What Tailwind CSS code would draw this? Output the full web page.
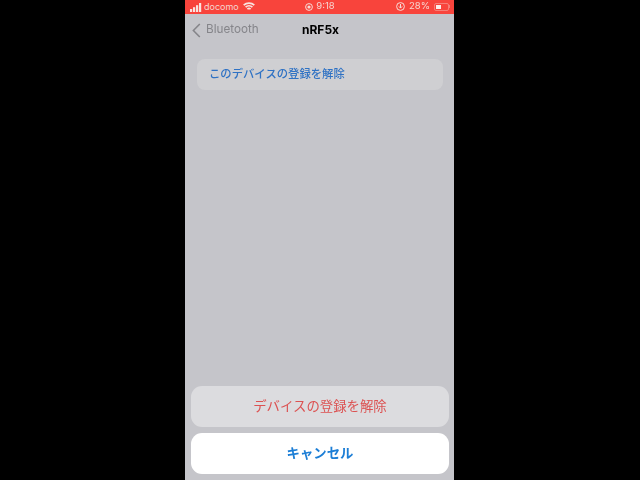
<!DOCTYPE html>
<html lang="ja">
<head>
  <meta charset="UTF-8">
  <title>nRF5x</title>
  <script src="https://cdn.jsdelivr.net/npm/@tailwindcss/browser@4"></script>
</head>
<body class="w-[640px] h-[480px] overflow-hidden bg-black font-['Inter','Noto_Sans_CJK_JP',sans-serif]">
  <div class="w-[269px] h-[480px] ml-[185px] flex flex-col bg-[#c5c5ca] blur-[0.35px]">
    <!-- status bar -->
    <div class="h-[14px] bg-[#f8443c] grid grid-cols-3 items-center text-[#f6d5d0] pl-[5px] pr-[4px]">
      <div class="flex items-center gap-[3px] text-[9px]">
        <svg width="13" height="9" viewBox="0 0 13 9" fill="#f8e4e0"><rect x="0" y="6" width="2.2" height="3"/><rect x="3" y="4.2" width="2.2" height="4.8"/><rect x="6" y="2.2" width="2.2" height="6.8"/><rect x="9" y="0" width="2.2" height="9"/></svg>
        <span class="-ml-[2px]">docomo</span>
        <svg width="12" height="9" viewBox="0 0 12 9" fill="none" stroke="#f8e4e0" stroke-width="1.7" class="ml-[1px] -mt-[2px]"><path d="M.7 3.2a7.6 7.6 0 0 1 10.6 0"/><path d="M2.6 5.2a5 5 0 0 1 6.8 0"/><path d="M4.4 7.2a2.4 2.4 0 0 1 3.2 0"/></svg>
      </div>
      <div class="flex items-center justify-center gap-[3px] text-[9.5px] -mt-[1px]">
        <svg width="8" height="8" viewBox="0 0 8 8" fill="none" stroke="#f6dcd8"><circle cx="4" cy="4" r="3.4"/><circle cx="4" cy="4" r="1.6" fill="#f6dcd8" stroke="none"/></svg>
        <span>9:18</span>
      </div>
      <div class="flex items-center justify-end gap-[4px] text-[9.5px] -mt-[1px]">
        <svg width="9" height="9" viewBox="0 0 9 9" fill="none" stroke="#f6dcd8"><circle cx="4.5" cy="4.5" r="3.9"/><path d="M4.5 2v4M2.9 4.4l1.6 1.7 1.6-1.7" stroke-width="1"/></svg>
        <span>28%</span>
        <div class="flex items-center">
          <div class="w-[15px] h-[8px] rounded-[2px] border border-[#f6b8b2]/50 p-[1px] flex"><div class="w-[5px] bg-[#fbeeea]"></div></div>
          <div class="w-[1px] h-[3px] bg-[#f6b8b2]/50"></div>
        </div>
      </div>
    </div>
    <!-- nav bar -->
    <div class="relative h-[31px] flex items-center shrink-0">
      <svg width="9" height="15" viewBox="0 0 9 15" fill="none" stroke="#85858a" stroke-width="1.6" class="ml-[7px] mt-[1px]"><path d="M7.8 1 1.4 7.5l6.4 6.5"/></svg>
      <span class="ml-[5px] mt-[1px] text-[11.7px] text-[#85858a]">Bluetooth</span>
      <span class="absolute left-[117px] top-[7px] text-[12px] font-bold text-black">nRF5x</span>
    </div>
    <!-- list row -->
    <div class="ml-[12px] mr-[11px] mt-[14px] h-[31px] rounded-[8px] bg-[#cfcfd2] flex items-center px-[12px] text-[11.35px] font-medium text-[#2f72c4]">
      <span class="mt-[1px]">このデバイスの登録を解除</span>
    </div>
    <!-- action sheet -->
    <div class="mt-auto ml-[6px] mr-[5px] mb-[6px] flex flex-col gap-[6px]">
      <div class="h-[41px] rounded-[11px] bg-[#dcdcdf] flex items-center justify-center text-[13.4px] text-[#dc5252]">デバイスの登録を解除</div>
      <div class="h-[41px] rounded-[11px] bg-white flex items-center justify-center text-[13.4px] font-bold text-[#1c7ed6]">キャンセル</div>
    </div>
  </div>
</body>
</html>
